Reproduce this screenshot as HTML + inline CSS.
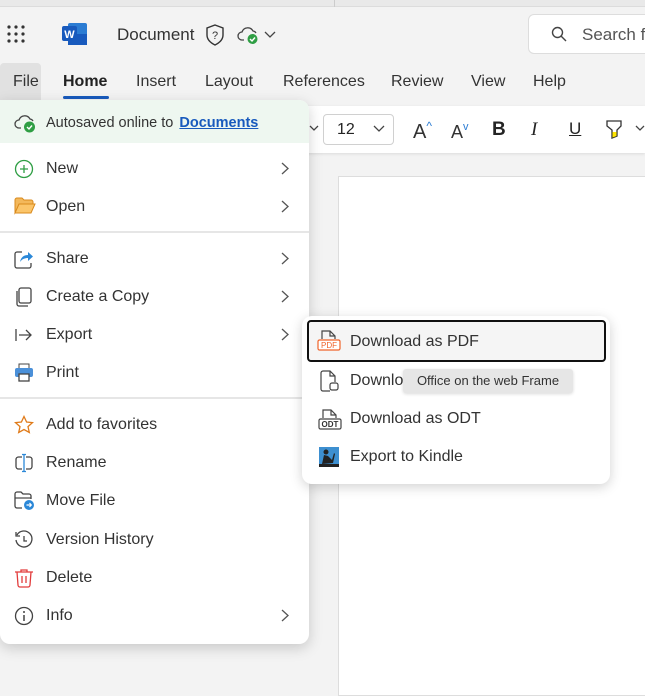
<!DOCTYPE html>
<html><head><meta charset="utf-8"><style>
*{box-sizing:border-box;margin:0;padding:0}
body{width:645px;height:691px;overflow:hidden;background:#f3f3f3;font-family:"Liberation Sans",sans-serif;color:#242424;position:relative;white-space:nowrap}
.abs{position:absolute}
.top{left:0;top:0;width:645px;height:7px;background:#e9e9e9;border-bottom:1px solid #dcdcdc}
.tabs span{position:absolute;top:73px;font-size:16px;color:#333}
.menu{left:0;top:100px;width:309px;height:544px;background:#fff;border-radius:0 10px 10px 10px;box-shadow:0 4px 14px rgba(0,0,0,.18);overflow:hidden}
.item{position:absolute;left:0;width:309px;height:38px;font-size:16px;line-height:40px;padding-left:46px;color:#333}
.item svg.ic{position:absolute;left:14px;top:10px}
.chev{position:absolute;right:20px;top:13px}
.sep{position:absolute;left:0;width:309px;height:2px;background:#e6e6e6}
.sub{left:302px;top:316px;width:308px;height:168px;background:#fff;border-radius:10px;box-shadow:0 3px 12px rgba(0,0,0,.18)}
.sitem{position:absolute;left:5px;width:299px;height:42px;font-size:16px;line-height:42px;padding-left:43px;color:#333}
.sitem svg{position:absolute;left:11px;top:10px}
</style></head><body>
<div class="abs top"></div>
<div class="abs" style="left:334px;top:0;width:1px;height:7px;background:#ccc"></div>
<svg class="abs" style="left:7px;top:25px" width="18" height="18"><g fill="#333"><circle cx="2" cy="2" r="1.6"/><circle cx="9" cy="2" r="1.6"/><circle cx="16" cy="2" r="1.6"/><circle cx="2" cy="9" r="1.6"/><circle cx="9" cy="9" r="1.6"/><circle cx="16" cy="9" r="1.6"/><circle cx="2" cy="16" r="1.6"/><circle cx="9" cy="16" r="1.6"/><circle cx="16" cy="16" r="1.6"/></g></svg>
<svg class="abs" style="left:62px;top:22px" width="26" height="24"><rect x="6" y="1" width="19" height="22" rx="2" fill="#2b7cd3"/><rect x="6" y="12" width="19" height="11" fill="#185abd"/><rect x="0" y="4" width="15" height="15" rx="2" fill="#185abd"/><text x="7.5" y="16" font-size="11" font-weight="bold" fill="#fff" text-anchor="middle" font-family="Liberation Sans">W</text></svg>
<div class="abs" style="left:117px;top:25px;font-size:17px;color:#333">Document</div>
<svg class="abs" style="left:205px;top:24px" width="20" height="22"><path d="M10 1 L18 4 V11 C18 16 14 19 10 21 C6 19 2 16 2 11 V4 Z" fill="none" stroke="#333" stroke-width="1.4"/><text x="10" y="15" font-size="11" text-anchor="middle" fill="#333" font-family="Liberation Sans">?</text></svg>
<svg class="abs" style="left:237px;top:24px" width="24" height="22"><path d="M7 16 H5 A4 4 0 0 1 5 8 A6 6 0 0 1 16 7 A4 4 0 0 1 19 9" fill="none" stroke="#444" stroke-width="1.3"/><circle cx="15.5" cy="15" r="5" fill="#2f9e44"/><path d="M13 15 l2 2 l3-3.5" stroke="#fff" stroke-width="1.4" fill="none"/></svg>
<svg class="abs" style="left:264px;top:31px" width="12" height="8"><path d="M1 1 L6 6 L11 1" fill="none" stroke="#444" stroke-width="1.3"/></svg>
<div class="abs" style="left:528px;top:14px;width:130px;height:40px;background:#fff;border:1px solid #ddd;border-radius:6px"></div>
<svg class="abs" style="left:551px;top:26px" width="16" height="16"><circle cx="6.5" cy="6.5" r="5" fill="none" stroke="#444" stroke-width="1.4"/><path d="M10 10 L15 15" stroke="#444" stroke-width="1.4"/></svg>
<div class="abs" style="left:582px;top:25px;font-size:17px;color:#555">Search fo</div>
<div class="abs" style="left:0;top:63px;width:41px;height:37px;background:#e1e1e1;border-radius:4px 4px 0 0"></div>
<div class="tabs">
<span style="left:13px">File</span>
<span style="left:63px;font-weight:bold;color:#222">Home</span>
<span style="left:136px">Insert</span>
<span style="left:205px">Layout</span>
<span style="left:283px">References</span>
<span style="left:391px">Review</span>
<span style="left:471px">View</span>
<span style="left:533px">Help</span>
</div>
<div class="abs" style="left:63px;top:96px;width:46px;height:3px;background:#185abd;border-radius:2px"></div>
<div class="abs" style="left:300px;top:106px;width:345px;height:47px;background:#fff;box-shadow:0 1px 3px rgba(0,0,0,.1)"></div>
<svg class="abs" style="left:309px;top:125px" width="10" height="7"><path d="M1 1 L5 5 L9 1" fill="none" stroke="#444" stroke-width="1.3"/></svg>
<div class="abs" style="left:323px;top:114px;width:71px;height:31px;border:1px solid #d0d0d0;border-radius:4px"></div>
<div class="abs" style="left:337px;top:121px;font-size:16px">12</div>
<svg class="abs" style="left:373px;top:125px" width="12" height="8"><path d="M1 1 L6 6 L11 1" fill="none" stroke="#444" stroke-width="1.3"/></svg>
<div class="abs" style="left:413px;top:119px;font-size:20px;color:#333">A<span style="font-size:12px;color:#2b7cd3;vertical-align:8px">^</span></div>
<div class="abs" style="left:451px;top:121px;font-size:18px;color:#333">A<span style="font-size:11px;color:#2b7cd3;vertical-align:8px">v</span></div>
<div class="abs" style="left:492px;top:119px;font-size:19px;font-weight:bold">B</div>
<div class="abs" style="left:531px;top:119px;font-size:19px;font-style:italic;font-family:'Liberation Serif',serif">I</div>
<div class="abs" style="left:569px;top:119px;font-size:17px;text-decoration:underline">U</div>
<svg class="abs" style="left:605px;top:118px" width="20" height="24"><path d="M2 3 H16 V8 L12 12 V18 L7 20 V12 L2 8 Z" fill="none" stroke="#333" stroke-width="1.3"/><path d="M7.5 14 L11.5 14 L11.5 18 L7.5 19.5Z" fill="#ffe600"/></svg>
<svg class="abs" style="left:635px;top:125px" width="10" height="7"><path d="M1 1 L5 5 L9 1" fill="none" stroke="#444" stroke-width="1.3"/></svg>
<div class="abs" style="left:338px;top:176px;width:320px;height:520px;background:#fff;border:1px solid #ddd"></div>
<div class="abs menu">
 <div class="abs" style="left:0;top:0;width:309px;height:43px;background:#eef7f0"></div>
 <svg class="abs" style="left:14px;top:12px" width="26" height="22"><path d="M7 16 H5 A4 4 0 0 1 5 8 A6 6 0 0 1 16 7 A4 4 0 0 1 19 9" fill="none" stroke="#444" stroke-width="1.3"/><circle cx="15.5" cy="15" r="5.5" fill="#2f9e44"/><path d="M13 15 l2 2 l3-3.5" stroke="#fff" stroke-width="1.4" fill="none"/></svg>
 <div class="abs" style="left:46px;top:15px;font-size:14.5px;color:#333">Autosaved online to <span style="color:#185abd;text-decoration:underline;font-weight:bold;margin-left:2px">Documents</span></div>
 <div class="item" style="top:49px"><svg class="ic" width="20" height="20"><circle cx="10" cy="10" r="8.5" fill="none" stroke="#2f9e44" stroke-width="1.3"/><path d="M10 6 V14 M6 10 H14" stroke="#2f9e44" stroke-width="1.3"/></svg>New<svg class="chev" width="8" height="13"><path d="M1 1 L7 6.5 L1 12" fill="none" stroke="#555" stroke-width="1.3"/></svg></div>
 <div class="item" style="top:87px"><svg class="ic" width="22" height="18"><path d="M1 3 A2 2 0 0 1 3 1 H8 L10 3 H17 A2 2 0 0 1 19 5 V7 H6 L1 16 Z" fill="#f3b85b" stroke="#d98a1c"/><path d="M5 7 H21 L17 16 H1 Z" fill="#fbc56a" stroke="#d98a1c"/></svg>Open<svg class="chev" width="8" height="13"><path d="M1 1 L7 6.5 L1 12" fill="none" stroke="#555" stroke-width="1.3"/></svg></div>
 <div class="sep" style="top:131px"></div>
 <div class="item" style="top:139px"><svg class="ic" width="20" height="20"><path d="M8 3 H3 A2 2 0 0 0 1 5 V17 A2 2 0 0 0 3 19 H15 A2 2 0 0 0 17 17 V14" fill="none" stroke="#444" stroke-width="1.3"/><path d="M6 13 C7 8 10 6 14 6 V3 L19 7.5 L14 12 V9 C11 9 8 10 6 13Z" fill="#2b88d8"/></svg>Share<svg class="chev" width="8" height="13"><path d="M1 1 L7 6.5 L1 12" fill="none" stroke="#555" stroke-width="1.3"/></svg></div>
 <div class="item" style="top:177px"><svg class="ic" width="20" height="20"><rect x="5" y="1" width="12" height="15" rx="2" fill="none" stroke="#444" stroke-width="1.3"/><path d="M3 4 V17 A2 2 0 0 0 5 19 H14" fill="none" stroke="#444" stroke-width="1.3"/></svg>Create a Copy<svg class="chev" width="8" height="13"><path d="M1 1 L7 6.5 L1 12" fill="none" stroke="#555" stroke-width="1.3"/></svg></div>
 <div class="item" style="top:215px"><svg class="ic" width="20" height="20"><path d="M2 4 V16 M5 10 H17 M12 5 L17 10 L12 15" fill="none" stroke="#444" stroke-width="1.3"/></svg>Export<svg class="chev" width="8" height="13"><path d="M1 1 L7 6.5 L1 12" fill="none" stroke="#555" stroke-width="1.3"/></svg></div>
 <div class="item" style="top:253px"><svg class="ic" width="20" height="20"><rect x="5" y="1" width="10" height="5" fill="none" stroke="#444"/><rect x="1" y="5" width="18" height="9" rx="2" fill="#4a90d9"/><rect x="5" y="11" width="10" height="7" fill="#fff" stroke="#444" stroke-width="1.3"/></svg>Print</div>
 <div class="sep" style="top:297px"></div>
 <div class="item" style="top:305px"><svg class="ic" width="20" height="20"><path d="M10 1.5 L12.6 7 L18.5 7.6 L14 11.6 L15.3 17.5 L10 14.5 L4.7 17.5 L6 11.6 L1.5 7.6 L7.4 7 Z" fill="none" stroke="#e07b1a" stroke-width="1.3"/></svg>Add to favorites</div>
 <div class="item" style="top:343px"><svg class="ic" width="20" height="20"><rect x="2" y="4" width="16" height="12" rx="2.5" fill="none" stroke="#444" stroke-width="1.3"/><rect x="8" y="3" width="4" height="14" fill="#fff"/><path d="M10 1 V19 M8 1.5 H12 M8 18.5 H12" stroke="#2b88d8" stroke-width="1.3"/></svg>Rename</div>
 <div class="item" style="top:381px"><svg class="ic" width="22" height="20"><path d="M8 17 H3 A2 2 0 0 1 1 15 V3 A2 2 0 0 1 3 1 H7 L9 3 H15 A2 2 0 0 1 17 5 V8" fill="none" stroke="#444" stroke-width="1.3"/><path d="M1 7 H17" stroke="#444" stroke-width="1.2"/><circle cx="15" cy="14" r="5" fill="#2b88d8"/><path d="M12.5 14 H17 M15.5 12 L17.3 14 L15.5 16" stroke="#fff" stroke-width="1.2" fill="none"/></svg>Move File</div>
 <div class="item" style="top:420px"><svg class="ic" width="20" height="20"><path d="M3 5 A8 8 0 1 1 2 10" fill="none" stroke="#444" stroke-width="1.3"/><path d="M2 2 V6 H6" fill="none" stroke="#444" stroke-width="1.3"/><path d="M10 6 V11 H13" fill="none" stroke="#444" stroke-width="1.3"/></svg>Version History</div>
 <div class="item" style="top:458px"><svg class="ic" width="20" height="20"><path d="M1 4 H19 M7 4 V2 H13 V4 M3 4 L4 17 A2 2 0 0 0 6 19 H14 A2 2 0 0 0 16 17 L17 4 M8 8 V15 M12 8 V15" fill="none" stroke="#e23b3b" stroke-width="1.3"/></svg>Delete</div>
 <div class="item" style="top:496px"><svg class="ic" width="20" height="20"><circle cx="10" cy="10" r="8.5" fill="none" stroke="#444" stroke-width="1.3"/><path d="M10 9 V15" stroke="#444" stroke-width="1.5"/><circle cx="10" cy="6" r="1" fill="#444"/></svg>Info<svg class="chev" width="8" height="13"><path d="M1 1 L7 6.5 L1 12" fill="none" stroke="#555" stroke-width="1.3"/></svg></div>
</div>
<div class="abs sub">
 <div class="sitem" style="top:4px;border:2px solid #111;border-radius:4px;background:#f5f5f5;padding-left:41px;line-height:40px"><svg width="24" height="24" style="left:8px;top:7px"><path d="M5 10 V2 H13 L18 7 V10 M13 2 V7 H18" fill="none" stroke="#444" stroke-width="1.2"/><rect x="1" y="11" width="22" height="10" rx="1.5" fill="#fff" stroke="#f0632a" stroke-width="1.2"/><text x="12" y="19" font-size="8" text-anchor="middle" fill="#f0632a" font-family="Liberation Sans">PDF</text></svg>Download as PDF</div>
 <div class="sitem" style="top:44px"><svg width="22" height="24"><path d="M12 21 H5 A2 2 0 0 1 3 19 V3 A2 2 0 0 1 5 1 H12 L17 6 V12 M12 1 V6 H17" fill="none" stroke="#444" stroke-width="1.2"/><rect x="12" y="13" width="8" height="7" rx="2" fill="none" stroke="#444" stroke-width="1.2"/></svg>Download as Word Documents</div>
 <div class="sitem" style="top:82px"><svg width="24" height="24"><path d="M5 10 V2 H13 L18 7 V10 M13 2 V7 H18" fill="none" stroke="#444" stroke-width="1.2"/><rect x="1" y="11" width="22" height="10" rx="1.5" fill="#fff" stroke="#444" stroke-width="1.2"/><text x="12" y="19" font-size="8" text-anchor="middle" fill="#333" font-family="Liberation Sans" font-weight="bold">ODT</text></svg>Download as ODT</div>
 <div class="sitem" style="top:120px"><svg width="22" height="22"><rect x="1" y="1" width="20" height="20" fill="#3d8fd0"/><path d="M1 21 V18 H21 V21Z" fill="#222"/><circle cx="8" cy="6" r="2.5" fill="#222"/><path d="M4 18 L6 9 L10 10 L14 14 L16 7 L17 8 L15 17 Z" fill="#222"/></svg>Export to Kindle</div>
</div>
<div class="abs" style="left:403px;top:369px;width:170px;height:24px;background:#e6e6e6;border-radius:3px;box-shadow:0 1px 3px rgba(0,0,0,.15);font-size:13px;line-height:24px;text-align:center;color:#333">Office on the web Frame</div>
</body></html>
